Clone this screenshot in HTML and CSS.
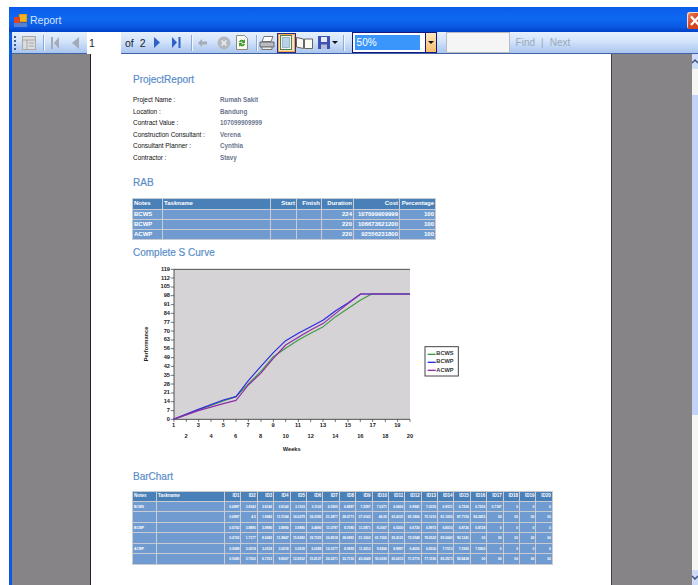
FILE: index.html
```html
<!DOCTYPE html>
<html lang="en">
<head>
<meta charset="utf-8">
<title>Report</title>
<link rel="stylesheet" href="styles.css">
</head>
<body>
<div class="window">
  <header class="titlebar">
    <svg class="app-icon" width="13" height="13" viewBox="0 0 13 13"><rect x="5" y="0" width="8" height="8" fill="#f5b21d" stroke="#a66a00" stroke-width=".6"/><rect x="0" y="3" width="6" height="7" fill="#d8442c"/><rect x="0" y="9" width="13" height="4" fill="#5b7fd0"/></svg>
    <span class="title-text">Report</span>
    <span class="close"><svg width="11" height="17" viewBox="0 0 11 17"><path d="M4 4.500 L12 13 M12 4.500 L4 13" stroke="#fff" stroke-width="2.400" fill="none"/></svg></span>
  </header>

  <nav class="toolbar">
    <span class="grip"></span>
    <svg class="tool w-map" width="14" height="14" viewBox="0 0 14 14"><rect x=".5" y=".5" width="13" height="13" fill="#dcdcdc" stroke="#a8a8a8"/><path d="M.5 4H13.500M5 4V13.500M7 7H12M7 10H12" stroke="#a8a8a8" fill="none"/></svg>
    <span class="sep sep-a"></span>
    <svg class="tool w-first" width="10" height="12" viewBox="0 0 10 12"><path d="M1 0h2v12H1zM9 0v12L4 6z" fill="#a4abb6"/></svg>
    <svg class="tool w-prev" width="7" height="12" viewBox="0 0 7 12"><path d="M7 0v12L0 6z" fill="#a4abb6"/></svg>
    <span class="page-input">1</span>
    <span class="of">of</span>
    <span class="total">2</span>
    <svg class="tool w-next" width="6" height="11" viewBox="0 0 6 11"><path d="M0 0v11l6-5.500z" fill="#2f62c8"/></svg>
    <svg class="tool w-last" width="9" height="11" viewBox="0 0 9 11"><path d="M0 0v11l5-5.500zM6.500 0h2v11h-2z" fill="#2f62c8"/></svg>
    <span class="sep sep-b"></span>
    <svg class="tool w-back" width="9" height="8" viewBox="0 0 9 8"><path d="M4 0v2.500h5v3H4V8L0 4z" fill="#a4abb6"/></svg>
    <svg class="tool w-stop" width="14" height="14" viewBox="0 0 14 14"><circle cx="7" cy="7" r="6.500" fill="#b4b8bf"/><path d="M4.500 4.500l5 5M9.500 4.500l-5 5" stroke="#eceef2" stroke-width="1.600"/></svg>
    <svg class="tool w-refresh" width="12" height="15" viewBox="0 0 12 15"><path d="M.5.5h8l3 3v11H.5z" fill="#fbfbf4" stroke="#8b8b80"/><path d="M3 7a3 3 0 0 1 5-1.500L9 4v4H5.500l1.200-1.200A1.500 1.500 0 0 0 4.500 7.500zM9 9a3 3 0 0 1-5 1.500L3 12V8h3.500L5.300 9.200A1.500 1.500 0 0 0 7.500 8.500z" fill="#3f9a2e"/></svg>
    <span class="sep sep-c"></span>
    <svg class="tool w-print" width="16" height="14" viewBox="0 0 16 14"><path d="M5 .5h9l-2 5H3z" fill="#fff" stroke="#777"/><path d="M1 6h14v5H1z" fill="#b9bcc2" stroke="#666"/><path d="M3 11h10v2.500H3z" fill="#eee" stroke="#777"/></svg>
    <span class="layout-btn"><svg width="12" height="15" viewBox="0 0 12 15"><rect x=".5" y=".5" width="11" height="14" fill="#f4f4e8" stroke="#4f7f5a"/><rect x="2.500" y="2.500" width="7" height="10" fill="#b9d2e8" stroke="#7897ad" stroke-width=".6"/></svg></span>
    <svg class="tool w-setup" width="17" height="13" viewBox="0 0 17 13"><path d="M.5 1.500l7 1.500v9.500l-7-1.500zM8.500 3h8v9.500h-8z" fill="#fbfbf6" stroke="#666"/></svg>
    <svg class="tool w-save" width="12" height="13" viewBox="0 0 12 13"><rect width="12" height="13" fill="#3d53b4"/><rect x="3" y="1" width="6" height="5" fill="#e8ebf5"/><rect x="3" y="8.500" width="6" height="4.500" fill="#b8bed2"/></svg>
    <span class="caret"></span>
    <span class="sep sep-d"></span>
    <span class="zoom-box"><span class="zoom-value">50%</span><span class="zoom-arrow"><span class="caret"></span></span></span>
    <span class="find-box"></span>
    <span class="find-link find-a">Find</span>
    <span class="find-sep">|</span>
    <span class="find-link">Next</span>
  </nav>

  <main class="viewport">
    <div class="gutter-left"></div>
    <article class="page">
      <h2 class="heading h-first">ProjectReport</h2>
      <dl class="meta">
        <dt>Project Name :</dt><dd>Rumah Sakit</dd>
        <dt>Location :</dt><dd>Bandung</dd>
        <dt>Contract Value :</dt><dd>107099909999</dd>
        <dt>Construction Consultant :</dt><dd>Verena</dd>
        <dt>Consultant Planner :</dt><dd>Cynthia</dd>
        <dt>Contractor :</dt><dd>Stavy</dd>
      </dl>

      <h2 class="heading h-rab">RAB</h2>
      <table class="grid rab">
        <colgroup><col class="r1"><col class="r2"><col class="r3"><col class="r4"><col class="r5"><col class="r6"><col class="r7"></colgroup>
        <thead><tr><th class="left">Notes</th><th class="left">Taskname</th><th>Start</th><th>Finish</th><th>Duration</th><th>Cost</th><th>Percentage</th></tr></thead>
        <tbody>
          <tr><td class="left">BCWS</td><td></td><td></td><td></td><td>224</td><td>107099909999</td><td>100</td></tr>
          <tr><td class="left">BCWP</td><td></td><td></td><td></td><td>220</td><td>106673621200</td><td>100</td></tr>
          <tr><td class="left">ACWP</td><td></td><td></td><td></td><td>220</td><td>92556231800</td><td>100</td></tr>
        </tbody>
      </table>

      <h2 class="heading h-curve">Complete S Curve</h2>
      <svg class="chart" width="340" height="200" viewBox="0 0 1020 600">
        <rect x="132" y="28" width="708" height="450" fill="#d6d3d6"/>
        <path d="M132 28H840M132 28V478H840" fill="none" stroke="#333" stroke-width="2.500"/>
        <path class="ticks" d="M122 28h10M122 54h10M122 81h10M122 107h10M122 134h10M122 160h10M122 187h10M122 213h10M122 240h10M122 266h10M122 293h10M122 319h10M122 346h10M122 372h10M122 399h10M122 425h10M122 452h10M122 478h10M132 478v8M169 478v8M206 478v8M243 478v8M281 478v8M318 478v8M355 478v8M393 478v8M430 478v8M467 478v8M505 478v8M542 478v8M579 478v8M616 478v8M654 478v8M691 478v8M728 478v8M766 478v8M803 478v8M840 478v8"/>
        <polyline class="line" stroke="#3f9a45" points="130,478 205,450 280,423 318,410 355,372 392,335 430,290 467,265 505,240 542,220 580,200 617,170 655,145 692,120 725,102 840,102"/>
        <polyline class="line" stroke="#2a2ae0" points="130,478 205,448 280,420 318,410 355,362 392,320 430,278 467,242 505,220 542,200 580,180 617,152 655,128 692,102 840,102"/>
        <polyline class="line" stroke="#8f2ba8" points="130,478 205,452 280,431 318,421 355,375 392,340 430,295 467,255 505,232 542,210 580,190 617,160 655,130 692,102 840,102"/>
        <g class="ylab">
          <text x="120" y="32">119</text><text x="120" y="59">112</text><text x="120" y="85">105</text><text x="120" y="112">98</text><text x="120" y="138">91</text><text x="120" y="165">84</text><text x="120" y="191">77</text><text x="120" y="218">70</text><text x="120" y="244">63</text><text x="120" y="271">56</text><text x="120" y="297">49</text><text x="120" y="324">42</text><text x="120" y="350">35</text><text x="120" y="377">28</text><text x="120" y="403">21</text><text x="120" y="430">14</text><text x="120" y="456">7</text><text x="120" y="483">0</text>
        </g>
        <g class="xlab">
          <text x="131" y="500">1</text><text x="205" y="500">3</text><text x="280" y="500">5</text><text x="354" y="500">7</text><text x="429" y="500">9</text><text x="504" y="500">11</text><text x="579" y="500">13</text><text x="654" y="500">15</text><text x="728" y="500">17</text><text x="802" y="500">19</text>
          <text x="168" y="533">2</text><text x="243" y="533">4</text><text x="317" y="533">6</text><text x="392" y="533">8</text><text x="467" y="533">10</text><text x="542" y="533">12</text><text x="616" y="533">14</text><text x="691" y="533">16</text><text x="766" y="533">18</text><text x="840" y="533">20</text>
        </g>
        <text class="axis-title" x="485" y="574">Weeks</text>
        <text class="axis-title" transform="translate(53 252) rotate(-90)">Performance</text>
        <rect x="885" y="260" width="100" height="88" fill="#fff" stroke="#444" stroke-width="3"/>
        <path d="M893 283h24" stroke="#3f9a45" stroke-width="4"/>
        <path d="M893 307h24" stroke="#2a2ae0" stroke-width="4"/>
        <path d="M893 331h24" stroke="#8f2ba8" stroke-width="4"/>
        <text class="legend" x="919" y="284">BCWS</text>
        <text class="legend" x="919" y="308">BCWP</text>
        <text class="legend" x="919" y="336">ACWP</text>
      </svg>

      <h2 class="heading h-bar">BarChart</h2>
      <table class="grid bars">
        <colgroup><col class="b1"><col class="b2"><col class="bn" span="20"></colgroup>
        <thead><tr><th class="left">Notes</th><th class="left">Taskname</th><th>ID1</th><th>ID2</th><th>ID3</th><th>ID4</th><th>ID5</th><th>ID6</th><th>ID7</th><th>ID8</th><th>ID9</th><th>ID10</th><th>ID11</th><th>ID12</th><th>ID13</th><th>ID14</th><th>ID15</th><th>ID16</th><th>ID17</th><th>ID18</th><th>ID19</th><th>ID20</th></tr></thead>
        <tbody>
          <tr class="short"><td class="left">BCWS</td><td></td><td>0.6897</td><td>3.8142</td><td>3.8142</td><td>3.8142</td><td>3.1103</td><td>3.1103</td><td>6.5505</td><td>6.8897</td><td>7.2297</td><td>7.0271</td><td>6.6600</td><td>6.9941</td><td>7.0350</td><td>6.9511</td><td>6.7200</td><td>6.7200</td><td>0.7187</td><td>0</td><td>0</td><td>0</td></tr>
          <tr class="tall"><td></td><td></td><td>0.6897</td><td>4.5</td><td>1.8942</td><td>11.5184</td><td>14.6279</td><td>18.2385</td><td>21.2877</td><td>28.0771</td><td>37.0143</td><td>46.05</td><td>63.4321</td><td>65.1806</td><td>75.1010</td><td>81.1050</td><td>87.7156</td><td>94.2455</td><td>00</td><td>00</td><td>00</td><td>00</td></tr>
          <tr class="short"><td class="left">BCWP</td><td></td><td>0.6702</td><td>3.8890</td><td>3.8890</td><td>3.8890</td><td>3.8890</td><td>3.4890</td><td>11.0797</td><td>8.7080</td><td>11.0971</td><td>8.2007</td><td>6.5200</td><td>6.6720</td><td>6.9972</td><td>6.8010</td><td>6.8726</td><td>6.8728</td><td>0</td><td>0</td><td>0</td><td>0</td></tr>
          <tr class="tall"><td></td><td></td><td>0.6702</td><td>1.7177</td><td>8.0682</td><td>11.9847</td><td>15.8282</td><td>18.7225</td><td>30.8018</td><td>38.0981</td><td>51.1002</td><td>61.7000</td><td>65.4121</td><td>72.0548</td><td>78.0522</td><td>85.0043</td><td>93.1241</td><td>00</td><td>00</td><td>00</td><td>00</td><td>00</td></tr>
          <tr class="short"><td class="left">ACWP</td><td></td><td>0.5689</td><td>3.0518</td><td>3.0518</td><td>3.0518</td><td>3.0518</td><td>3.0288</td><td>10.3177</td><td>8.5893</td><td>11.2010</td><td>9.9266</td><td>8.9997</td><td>6.4020</td><td>6.6500</td><td>7.7012</td><td>7.5365</td><td>7.5900</td><td>0</td><td>0</td><td>0</td><td>0</td></tr>
          <tr class="tall"><td></td><td></td><td>0.5690</td><td>3.7500</td><td>6.7213</td><td>9.8007</td><td>12.8532</td><td>15.8127</td><td>26.0271</td><td>33.7150</td><td>45.0049</td><td>55.0030</td><td>65.0013</td><td>71.5770</td><td>77.1180</td><td>85.2573</td><td>92.8438</td><td>00</td><td>00</td><td>00</td><td>00</td><td>00</td></tr>
        </tbody>
      </table>
    </article>
    <div class="gutter-right"></div>
    <aside class="scrollbar">
      <span class="scroll-btn"><svg width="6" height="15" viewBox="0 0 6 15"><path d="M0 9l3-3 3 3" stroke="#3d4f7a" stroke-width="1.500" fill="none"/></svg></span>
      <span class="scroll-space"></span>
      <span class="scroll-thumb"></span>
      <span class="scroll-track"></span>
      <span class="scroll-btn"><svg width="6" height="15" viewBox="0 0 6 15"><path d="M0 6l3 3 3-3" stroke="#3d4f7a" stroke-width="1.500" fill="none"/></svg></span>
    </aside>
  </main>
</div>
</body>
</html>
```

FILE: styles.css
```css
html, body {
  margin: 0;
  height: 100%;
  overflow: hidden;
  background: #fff;
  font-family: "Liberation Sans", Arial, sans-serif;
}

/* Window frame */
.window {
  margin: 7px 0 0 9px;
  height: 578px;
  display: flex;
  flex-direction: column;
  background: #0a5be0;
}

.titlebar {
  height: 25px;
  flex: none;
  display: flex;
  align-items: center;
  padding-left: 5px;
  background: linear-gradient(#0a5ce8 0%, #0e68f2 45%, #0a58e2 80%, #0040c8 100%);
}

.app-icon { flex: none; margin-top: 1px; }

.title-text {
  margin-left: 3px;
  font-size: 10.500px;
  color: #d5e3fb;
}

.close {
  margin-left: auto;
  width: 11px;
  height: 17px;
  margin-top: 2px;
  border-radius: 3px 0 0 3px;
  box-shadow: inset 1px 1px 0 #f7d7c8;
  background: linear-gradient(135deg, #ec8a62, #d7431c 60%);
}

.close svg { display: block; }

/* Toolbar: every control keeps a fixed slot */
.toolbar {
  height: 22px;
  flex: none;
  margin-left: 3px;
  display: flex;
  align-items: center;
  box-sizing: border-box;
  border-bottom: 1px solid #3f64a8;
  background: linear-gradient(#e6f0fd 0%, #d3e3fa 45%, #a9c5ef 100%);
  font-size: 10.500px;
  color: #1b2430;
}

.grip {
  width: 2px;
  height: 14px;
  margin-left: 2px;
  background: repeating-linear-gradient(#3d5c95 0 2px, transparent 2px 4px);
}

.tool { flex: none; }
.w-map { margin-left: 6px; }
.sep { flex: none; width: 1px; height: 16px; background: #8ea9d2; box-shadow: 1px 0 0 #f3f7fd; }
.sep-a { margin-left: 7px; }
.w-first { margin-left: 6px; }
.w-prev { margin-left: 12px; }
.page-input {
  flex: none;
  width: 32px;
  height: 22px;
  margin-left: 8px;
  padding-left: 2px;
  line-height: 22px;
  background: #fff;
}
.of { margin-left: 4px; }
.total { margin-left: 6px; }
.w-next { margin-left: 8px; }
.w-last { margin-left: 12px; }
.sep-b { margin-left: 10px; }
.w-back { margin-left: 6px; }
.w-stop { margin-left: 10px; }
.w-refresh { margin-left: 5px; }
.sep-c { margin-left: 8px; }
.w-print { margin-left: 2px; }

.layout-btn {
  flex: none;
  box-sizing: border-box;
  width: 19px;
  height: 20px;
  margin-left: 2px;
  display: flex;
  align-items: center;
  justify-content: center;
  border: 1px solid #2a2a8c;
  box-shadow: inset 0 0 0 1px #f5a94a;
  background: #f7e3b5;
}

.w-setup { margin-left: 0; }
.w-save { margin-left: 5px; }

.caret {
  flex: none;
  width: 0;
  height: 0;
  border: 3px solid transparent;
  border-top: 3px solid #111;
  border-bottom: 0;
}

.toolbar > .caret { margin-left: 2px; }
.sep-d { margin-left: 5px; }

.zoom-box {
  flex: none;
  box-sizing: border-box;
  width: 85px;
  height: 21px;
  margin-left: 8px;
  display: flex;
  border: 1px solid #17177f;
  background: #fff;
}

.zoom-value {
  width: 65px;
  height: 15px;
  margin: 2px 0 0 2px;
  padding-left: 2px;
  box-sizing: border-box;
  line-height: 15px;
  font-size: 10px;
  background: #3a96fb;
  color: #fff;
}

.zoom-arrow {
  margin-left: auto;
  width: 10px;
  display: flex;
  align-items: center;
  justify-content: center;
  border-left: 1px solid #17177f;
  background: linear-gradient(#ffe9bf, #f7bd6b);
}

.find-box {
  flex: none;
  box-sizing: border-box;
  width: 64px;
  height: 21px;
  margin-left: 9px;
  border: 1px solid #b8bcc4;
  background: #f5f5f5;
}

.find-link { color: #9ca8b8; font-size: 10px; }
.find-a { margin-left: 6px; }
.find-sep { margin: 0 6px; color: #9ca8b8; font-size: 10px; }

/* Report viewing area */
.viewport {
  flex: 1;
  min-height: 0;
  margin-left: 3px;
  display: flex;
  background: #878487;
}

.gutter-left { flex: none; width: 78px; }
.gutter-right { flex: 1; }

.page {
  flex: none;
  box-sizing: border-box;
  width: 522px;
  padding: 18px 0 0 41px;
  background: #fff;
  border-left: 1px solid #222;
  border-right: 1px solid #444;
}

.heading {
  margin: 0 0 0 1px;
  height: 14px;
  line-height: 16px;
  font-size: 10px;
  font-weight: normal;
  color: #5a8ec9;
  -webkit-text-stroke: 0.2px #5a8ec9;
}

.h-rab { margin-top: 12px; }
.h-curve { margin-top: 5px; }
.h-bar { margin-top: 9px; }

.meta {
  margin: 8px 0 12px 1px;
  display: grid;
  grid-template-columns: 87px 1fr;
  grid-auto-rows: 11.500px;
  line-height: 11.500px;
  font-size: 6.500px;
}

.meta dt { color: #111; letter-spacing: -0.05px; }
.meta dd { margin: 0; color: #6b7690; font-size: 6.300px; font-weight: bold; }

/* Data tables */
.grid {
  table-layout: fixed;
  border-collapse: collapse;
  background: #6f9bd0;
  color: #fff;
  font-weight: bold;
  border: 1px solid #c9ccd2;
}

.grid th, .grid td {
  padding: 0 1px 0 0;
  border: 1px solid #c9ccd2;
  text-align: right;
  overflow: hidden;
  white-space: nowrap;
}

.grid th { background: #4a80b8; }
.grid .left { text-align: left; padding: 0 0 0 1px; }

.rab {
  width: 303px;
  margin-top: 9px;
  font-size: 6px;
}
.rab th { height: 10px; line-height: 9px; vertical-align: top; }
.rab td { height: 9px; line-height: 9px; }
.r1 { width: 30px; }
.r2 { width: 108px; }
.r3 { width: 26px; }
.r4 { width: 25px; }
.r5 { width: 32px; }
.r6 { width: 46px; }
.r7 { width: 36px; }

.chart {
  display: block;
  margin: 1px 0 0 -2px;
}

.bars {
  width: 420px;
  margin-top: 8px;
  font-size: 3.300px;
}
.bars th { height: 9px; line-height: 8px; vertical-align: top; font-size: 4.500px; }
.bars .short td { height: 9px; }
.bars .tall td { height: 10px; }
.b1 { width: 24px; }
.b2 { width: 68px; }
.bn { width: 16.400px; }

/* Chart text and marks */
.ticks { stroke: #333; stroke-width: 2; fill: none; }
.line { fill: none; stroke-width: 3.500; stroke-linejoin: round; }
.ylab text { font-size: 17px; font-weight: bold; text-anchor: end; fill: #222; }
.xlab text { font-size: 17px; font-weight: bold; text-anchor: middle; fill: #222; }
.axis-title { font-size: 17px; font-weight: bold; text-anchor: middle; fill: #222; }
.legend { font-size: 17px; font-weight: bold; fill: #333; }

/* Vertical scrollbar, cut off by the window edge */
.scrollbar {
  flex: none;
  width: 6px;
  margin-left: 1px;
  display: flex;
  flex-direction: column;
  background: #f5f5f2;
}

.scroll-btn { flex: none; height: 15px; background: #cfdcf8; }
.scroll-btn svg { display: block; }
.scroll-space { flex: none; height: 26px; }
.scroll-thumb { flex: none; height: 320px; background: #c3d3f7; }
.scroll-track { flex: 1; }
```
